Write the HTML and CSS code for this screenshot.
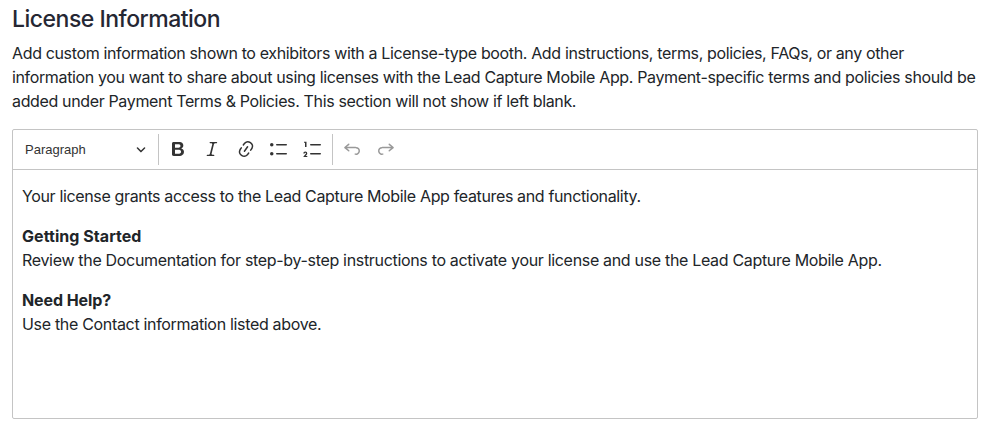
FILE: index.html
```html
<!DOCTYPE html>
<html lang="en">
<head>
  <meta charset="UTF-8"/>
  <meta name="viewport" content="width=device-width, initial-scale=1.0"/>
  <title>License Information</title>
  <link rel="stylesheet" href="styles.css">
</head>
<body>
  <section class="license-info">
    <h2>License Information</h2>
    <p class="description">Add custom information shown to exhibitors with a License-type booth. Add instructions, terms, policies, FAQs, or any other information you want to share about using licenses with the Lead Capture Mobile App. Payment-specific terms and policies should be added under Payment Terms &amp; Policies. This section will not show if left blank.</p>

    <div class="editor">
      <!-- Toolbar -->
      <div class="toolbar">
        <button class="heading-dropdown">
          <span>Paragraph</span>
          <svg class="arrow" viewBox="0 0 10 10"><path d="M.941 4.523a.75.75 0 1 1 1.06-1.06l3.006 3.005 3.005-3.005a.75.75 0 1 1 1.06 1.06l-3.549 3.55a.75.75 0 0 1-1.168-.136L.941 4.523z"/></svg>
        </button>
        <span class="separator"></span>
        <button class="tool" aria-label="Bold">
          <svg viewBox="0 0 20 20"><path d="M10.187 17H5.773c-.637 0-1.092-.138-1.364-.415-.273-.277-.409-.718-.409-1.323V4.738c0-.617.14-1.062.419-1.332.279-.27.73-.406 1.354-.406h4.68c.69 0 1.288.041 1.793.124.506.083.96.242 1.36.478.341.197.644.447.906.75a3.262 3.262 0 0 1 .808 2.162c0 1.401-.722 2.426-2.167 3.075C15.05 10.175 16 11.315 16 13.01a3.756 3.756 0 0 1-2.296 3.504 6.1 6.1 0 0 1-1.517.377c-.571.073-1.238.11-2 .11zm-.217-6.217H7v4.087h3.069c1.977 0 2.965-.69 2.965-2.072 0-.707-.256-1.22-.768-1.537-.512-.319-1.277-.478-2.296-.478zM7 5.13v3.619h2.606c.729 0 1.292-.067 1.69-.2a1.6 1.6 0 0 0 .91-.765c.165-.267.247-.566.247-.897 0-.707-.26-1.176-.778-1.409-.519-.232-1.31-.348-2.375-.348H7z"/></svg>
        </button>
        <button class="tool" aria-label="Italic">
          <svg viewBox="0 0 20 20"><path d="m9.586 14.633.021.004c-.036.335.095.655.393.962.082.083.173.15.274.201h1.474a.6.6 0 1 1 0 1.2H5.304a.6.6 0 0 1 0-1.2h1.15c.474-.07.809-.182 1.005-.334.157-.122.291-.32.404-.597l2.416-9.55a1.053 1.053 0 0 0-.281-.823 1.12 1.12 0 0 0-.442-.296H8.15a.6.6 0 0 1 0-1.2h6.443a.6.6 0 1 1 0 1.2h-1.195c-.376.056-.65.155-.823.296-.215.175-.423.439-.623.79l-2.366 9.347z"/></svg>
        </button>
        <button class="tool" aria-label="Link">
          <svg viewBox="0 0 20 20"><path d="m11.077 15 .991-1.416a.75.75 0 1 1 1.229.86l-1.148 1.64a.748.748 0 0 1-.217.206 5.251 5.251 0 0 1-8.503-5.955.741.741 0 0 1 .12-.274l1.147-1.639a.75.75 0 1 1 1.228.86L4.933 10.7l.006.003a3.75 3.75 0 0 0 6.132 4.294l.006.004zm5.494-5.335a.748.748 0 0 1-.12.274l-1.147 1.639a.75.75 0 1 1-1.228-.86l.86-1.23a3.75 3.75 0 0 0-6.144-4.301l-.86 1.229a.75.75 0 0 1-1.229-.86l1.148-1.64a.748.748 0 0 1 .217-.206 5.251 5.251 0 0 1 8.503 5.955zm-4.563-2.532a.75.75 0 0 1 .184 1.045l-3.155 4.505a.75.75 0 1 1-1.229-.86l3.155-4.506a.75.75 0 0 1 1.045-.184z"/></svg>
        </button>
        <button class="tool" aria-label="Bulleted List">
          <svg viewBox="0 0 20 20"><circle cx="2.75" cy="5.75" r="1.75"/><circle cx="2.75" cy="14.75" r="1.75"/><path d="M7 5.75c0 .414.336.75.75.75h9.5a.75.75 0 1 0 0-1.5h-9.5a.75.75 0 0 0-.75.75zm0 9c0 .414.336.75.75.75h9.5a.75.75 0 1 0 0-1.5h-9.5a.75.75 0 0 0-.75.75z"/></svg>
        </button>
        <button class="tool" aria-label="Numbered List">
          <svg viewBox="0 0 20 20"><path d="M7 5.75c0 .414.336.75.75.75h9.5a.75.75 0 1 0 0-1.5h-9.5a.75.75 0 0 0-.75.75zM3.5 3v5H2V3.7H1v-1h2.5V3zM.343 17.857l2.59-3.257H2.92a.6.6 0 1 0-1.04 0H.302a2 2 0 1 1 3.995 0h-.001c-.048.405-.16.734-.333.988-.175.254-.59.692-1.244 1.312H4.3v1h-4l.043-.043zM7 14.75a.75.75 0 0 1 .75-.75h9.5a.75.75 0 1 1 0 1.5h-9.5a.75.75 0 0 1-.75-.75z"/></svg>
        </button>
        <span class="separator"></span>
        <button class="tool" aria-label="Undo" disabled>
          <svg viewBox="0 0 20 20"><path d="m5.042 9.367 2.189 1.837a.75.75 0 0 1-.965 1.149l-3.788-3.18a.747.747 0 0 1-.21-.284.75.75 0 0 1 .17-.945L6.23 4.762a.75.75 0 1 1 .964 1.15L4.863 7.866h8.917A.75.75 0 0 1 14 7.9a4 4 0 1 1-1.477 7.718l.344-1.489a2.5 2.5 0 1 0 1.094-4.73l.008-.032H5.042z"/></svg>
        </button>
        <button class="tool" aria-label="Redo" disabled>
          <svg viewBox="0 0 20 20"><path d="m14.958 9.367-2.189 1.837a.75.75 0 0 0 .965 1.149l3.788-3.18a.747.747 0 0 0 .21-.284.75.75 0 0 0-.17-.945L13.77 4.762a.75.75 0 1 0-.964 1.15l2.331 1.955H6.22A.75.75 0 0 0 6 7.9a4 4 0 1 0 1.477 7.718l-.344-1.489A2.5 2.5 0 1 1 6.039 9.4l-.008-.032h8.927z"/></svg>
        </button>
      </div>

      <!-- Editable content -->
      <div class="content" contenteditable="true" spellcheck="false">
        <p class="intro">Your license grants access to the Lead Capture Mobile App features and functionality.</p>
        <p class="start"><strong>Getting Started</strong><br>Review the Documentation for step-by-step instructions to activate your license and use the Lead Capture Mobile App.</p>
        <p class="help"><strong>Need Help?</strong><br>Use the Contact information listed above.</p>
      </div>
    </div>
  </section>
</body>
</html>
```
FILE: styles.css
```css
*, *::before, *::after { box-sizing: border-box; }

body {
  margin: 0;
  font-family: Inter, sans-serif;
  font-size: 16px; line-height: 24px;
  letter-spacing: -.32px;
  background: #fff; color: #212529;
}

.license-info { padding: 5px 23px 0 12px; }
.license-info h2 {
  margin: 0 0 8px;
  font-size: 23px; font-weight: 500;
  line-height: 28px; letter-spacing: -.5px;
  color: #252733;
}
.description { margin: 0 0 16px; letter-spacing: -.355px; }

/* Editor */
.editor {
  height: 290px;
  border: 1px solid #c4c4c4; border-radius: 2px;
}
.toolbar {
  display: flex; align-items: center;
  height: 40px; padding: 0 5px 1px;
  border-bottom: 1px solid #c4c4c4;
}
.toolbar button {
  border: none; background: none;
  color: #333; cursor: pointer;
}
.toolbar svg { display: block; fill: currentColor; }
.heading-dropdown {
  display: flex; align-items: center;
  justify-content: space-between;
  width: 135px; height: 30px;
  margin-right: 5px; padding: 0 7px;
  font: 13px "Liberation Sans", Arial, sans-serif;
}
.arrow { width: 10px; height: 10px; }
.separator {
  width: 1px; height: 31px;
  margin-right: 4px; background: #c4c4c4;
}
.tool {
  display: grid; place-items: center;
  width: 30px; height: 30px;
  margin-right: 3.8px; padding: 0;
}
.tool svg { width: 20px; height: 20px; }
.toolbar .tool:disabled { color: #999; cursor: default; }

/* Content area */
.content { padding: 14px 9px; outline: none; }
.content p { margin: 0 0 16px; }
.content .intro { letter-spacing: -.355px; }
.content strong { font-weight: 700; letter-spacing: -.1px; }
.content .start strong { letter-spacing: .05px; }
```
